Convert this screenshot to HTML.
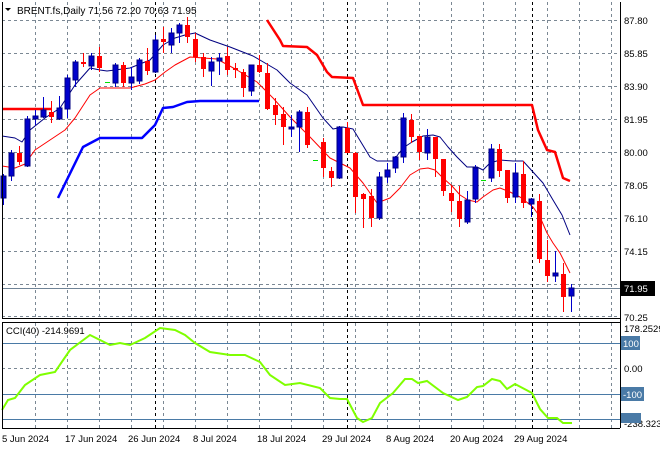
<!DOCTYPE html>
<html><head><meta charset="utf-8"><style>
html,body{margin:0;padding:0;background:#fff;}
svg{display:block;font-family:"Liberation Sans",sans-serif;}
</style></head><body>
<svg id="s" width="660" height="450" viewBox="0 0 660 450" xmlns="http://www.w3.org/2000/svg">
<rect width="660" height="450" fill="#fff"/>
<g id="grid" stroke="#7b8894" stroke-width="1" stroke-dasharray="3,3" fill="none" shape-rendering="crispEdges">
<path d="M2 20.5H620M2 53.5H620M2 86.5H620M2 119.5H620M2 152.5H620M2 185.5H620M2 218.5H620M2 251.5H620M2 284.5H620M2 316.5H620"/>
<path d="M2 368.5H620"/>
</g>
<g id="vg" stroke="#7b8894" stroke-dasharray="3,3" shape-rendering="crispEdges"></g>
<g stroke="#000" stroke-dasharray="3,3" shape-rendering="crispEdges">
<path d="M155.5 2V318M155.5 323V428M347.5 2V318M347.5 323V428M532.5 2V318M532.5 323V428"/>
</g>
<g stroke="#4a7aa6" shape-rendering="crispEdges">
<path d="M2 343.5H620M2 394.5H620M2 419.5H620"/>
</g>
<path d="M2 288.5H620" stroke="#6f8396" shape-rendering="crispEdges"/>
<g fill="none" stroke-linejoin="round">
<polyline stroke="#ff0000" stroke-width="2.5" points="2,109 52,109"/>
<polyline stroke="#ff0000" stroke-width="2.5" points="267,20 280,40 283,46 307,47 317,55 327,72 332,77 353,78 363,105 532,105 538,130 547,150 555,152 563,178 570,181"/>
<polyline stroke="#0000ff" stroke-width="2.5" points="58,198 83,147 100,138 142,138 155,125 163,108 173,107 187,102 200,101 259,101"/>
<polyline stroke="#000080" stroke-width="1" points="2,136 15,138 22,142 30,130 45,118 60,108 75,85 90,68 100,70 107,71 115,70 130,68 150,60 163,45 175,38 185,35 195,33 210,40 230,47 253,56 277,70 290,83 307,95 323,118 333,129 343,127 353,129 370,157 377,161 393,161 403,148 412,142 423,136 433,135 440,137 448,147 457,157 467,167 477,167 483,170 490,163 500,160 513,161 523,161 533,172 543,183 553,200 562,215 570,235"/>
<polyline stroke="#ff0000" stroke-width="1" points="2,166 15,168 25,164 35,150 50,140 65,130 75,118 90,95 100,88 130,88 145,84 155,80 165,72 175,65 190,57 217,59 237,70 257,82 273,98 290,117 310,137 330,158 340,163 350,168 363,183 377,203 390,198 400,188 410,175 420,169 428,168 435,170 443,178 452,186 460,195 468,200 477,202 483,197 493,190 500,188 510,192 520,197 533,207 540,217 547,233 553,243 560,253 570,273"/>
</g>
<g id="c" shape-rendering="crispEdges"></g>
<polyline fill="none" stroke="#7fff00" stroke-width="2" points="2,410 8,400 15,398 25,385 40,375 55,372 70,350 90,335 100,340 110,345 120,343 130,345 145,338 160,328 175,330 185,335 195,343 210,352 230,355 245,355 260,362 270,375 285,385 300,383 320,388 330,398 340,399 347,399 357,418 363,422 372,418 380,403 393,393 405,379 412,379 418,383 427,381 443,393 458,400 467,397 477,387 483,386 492,379 500,381 507,389 515,384 532,393 540,409 548,418 557,418 563,423 572,423"/>
<g stroke="#000" fill="none" shape-rendering="crispEdges">
<path d="M2.5 2V319M2 318.5H620M620.5 2V428M2.5 323V428M2 322.5H620M2 428.5H620"/>
</g>
<path d="M5 8L11 8L8 11Z" fill="#000"/>
<text x="17" y="14" font-size="10" fill="#000">BRENT.fs,Daily  71.56 72.20 70.63 71.95</text>
<text x="6" y="334" font-size="9.5" fill="#000">CCI(40) -214.9691</text>
<g font-size="9.5" fill="#000">
<text x="624" y="24">87.80</text>
<text x="624" y="57">85.85</text>
<text x="624" y="90">83.90</text>
<text x="624" y="123">81.95</text>
<text x="624" y="156">80.00</text>
<text x="624" y="189">78.05</text>
<text x="624" y="222">76.10</text>
<text x="624" y="255">74.15</text>
<text x="624" y="288">72.20</text>
<text x="624" y="321">70.25</text>
<text x="624" y="332">178.2529</text>
<text x="624" y="372">0.00</text>
<text x="624" y="427">-238.323</text>
</g>
<rect x="621" y="281" width="34" height="15" fill="#000"/>
<text x="624" y="292" font-size="9.5" fill="#fff">71.95</text>
<rect x="621" y="336" width="19" height="14" fill="#4a7aa6"/>
<text x="623" y="347" font-size="9.5" fill="#fff">100</text>
<rect x="621" y="387" width="23" height="14" fill="#4a7aa6"/>
<text x="623" y="398" font-size="9.5" fill="#fff">-100</text>
<rect x="621" y="413" width="20" height="10" fill="#4a7aa6"/>
<g font-size="9.5" fill="#000">
<text x="2" y="442">5 Jun 2024</text>
<text x="65" y="442">17 Jun 2024</text>
<text x="128" y="442">26 Jun 2024</text>
<text x="193" y="442">8 Jul 2024</text>
<text x="257" y="442">18 Jul 2024</text>
<text x="322" y="442">29 Jul 2024</text>
<text x="386" y="442">8 Aug 2024</text>
<text x="450" y="442">20 Aug 2024</text>
<text x="514" y="442">29 Aug 2024</text>
</g>
<script>
var NS="http://www.w3.org/2000/svg";
var vg=document.getElementById("vg"),d="";
for(var x=35;x<=611;x+=32){d+="M"+(x+.5)+" 2V318M"+(x+.5)+" 323V428";}
var p=document.createElementNS(NS,"path");p.setAttribute("d",d);vg.appendChild(p);
var C=[
[0,"b",176,198,174,205],[1,"b",153,176,150,181],[2,"r",153,162,146,165],[3,"b",119,166,116,167],
[4,"b",116,119,110,125],[5,"b",110,117,97,118],[6,"r",112,117,101,123],[7,"b",108,119,96,120],
[8,"b",78,109,75,118],[9,"b",62,80,60,87],[10,"r",62,64,53,67],[11,"b",56,66,53,70],
[12,"r",56,68,47,72],[13,"g",82,82,82,82],[14,"b",65,83,63,87],[15,"r",65,83,62,87],
[16,"b",77,83,67,90],[17,"b",60,81,58,84],[18,"r",61,71,48,75],[19,"b",40,72,35,73],
[20,"r",39,42,27,53],[21,"b",33,45,28,53],[22,"b",25,33,23,43],[23,"r",25,37,17,43],
[24,"r",39,57,33,62],[25,"r",57,69,53,77],[26,"b",62,71,57,86],[27,"b",58,61,53,75],
[28,"r",56,70,47,75],[29,"r",68,70,63,78],[30,"r",72,88,69,97],[31,"b",65,91,65,96],
[32,"r",65,72,55,73],[33,"r",73,109,63,110],[34,"r",105,115,98,125],[35,"r",114,127,107,145],
[36,"b",127,128,115,137],[37,"b",112,127,110,152],[38,"r",112,145,107,148],[39,"g",160,160,160,160],
[40,"r",142,168,138,177],[41,"r",171,178,167,187],[42,"b",127,178,126,179],[43,"r",128,153,122,153],
[44,"r",153,197,152,213],[45,"r",194,199,193,228],[46,"r",196,218,189,227],[47,"b",177,218,172,220],
[48,"b",170,177,163,183],[49,"b",157,168,156,173],[50,"b",118,157,113,163],[51,"r",120,137,114,143],
[52,"r",136,152,136,160],[53,"b",137,153,129,160],[54,"r",137,159,137,177],[55,"r",159,191,159,196],
[56,"r",193,201,185,212],[57,"r",201,219,186,227],[58,"b",200,222,191,224],[59,"b",168,199,165,203],
[60,"g",180,180,180,180],[61,"b",149,178,144,182],[62,"r",149,171,144,177],[63,"r",170,198,170,203],
[64,"b",173,197,163,203],[65,"r",174,203,161,208],[66,"b",199,204,198,217],[67,"r",201,259,194,263],
[68,"r",260,276,240,282],[69,"b",273,276,251,282],[70,"r",274,297,263,312],[71,"b",288,296,284,312]];
var g=document.getElementById("c");
C.forEach(function(c){
 var x=3+8*c[0],col=c[1]=="r"?"#ff0000":c[1]=="b"?"#0000cc":"#00e000";
 if(c[1]=="g"){var r=document.createElementNS(NS,"rect");r.setAttribute("x",x-2);r.setAttribute("y",c[2]);r.setAttribute("width",5);r.setAttribute("height",1);r.setAttribute("fill",col);g.appendChild(r);return;}
 var w=document.createElementNS(NS,"rect");w.setAttribute("x",x);w.setAttribute("y",c[4]);w.setAttribute("width",1);w.setAttribute("height",c[5]-c[4]);w.setAttribute("fill",col);g.appendChild(w);
 var b=document.createElementNS(NS,"rect");b.setAttribute("x",x-2);b.setAttribute("y",c[2]);b.setAttribute("width",5);b.setAttribute("height",Math.max(2,c[3]-c[2]));b.setAttribute("fill",col);
 if(c[1]=="b"){b.setAttribute("stroke","#000080");b.setAttribute("stroke-width","0.6");}
 g.appendChild(b);
});
</script>
</svg>
</body></html>
